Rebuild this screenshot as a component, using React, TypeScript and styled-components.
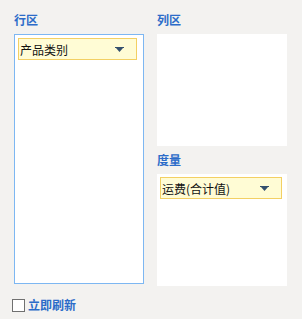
import * as React from 'react';
import styled, { createGlobalStyle } from 'styled-components';

const GlobalStyle = createGlobalStyle`
    html, body {
        margin: 0;
        padding: 0;
        background: #f3f2f0;
    }
    body {
        font-family: "Noto Sans CJK SC", "Noto Sans", sans-serif;
    }
`;

interface FieldProps {
    name: string;
}

const Field = ({ name }: FieldProps) => (
    <FieldChip>
        <span>{name}</span>
        <Arrow viewBox="0 0 9 5">
            <rect x="0" y="0" width="9" height="1" fill="#34506e" />
            <polygon points="1,1 8,1 4.5,5" fill="#34506e" />
        </Arrow>
    </FieldChip>
);

export default function App() {
    return (
        <>
            <GlobalStyle />
            <Page>
                <Columns>
                    <Column>
                        <Label>行区</Label>
                        <Zone $height={250} $active>
                            <Field name="产品类别" />
                        </Zone>
                    </Column>
                    <Column>
                        <Label>列区</Label>
                        <Zone $height={112} />
                        <Label $spaced>度量</Label>
                        <Zone $height={112}>
                            <Field name="运费(合计值)" />
                        </Zone>
                    </Column>
                </Columns>
                <CheckRow>
                    <CheckBox />
                    <CheckText>立即刷新</CheckText>
                </CheckRow>
            </Page>
        </>
    );
}

const Page = styled.div`
    width: 302px;
    height: 319px;
    box-sizing: border-box;
    padding: 10px 0 0 14px;
    display: flex;
    flex-direction: column;
`;

const Columns = styled.div`
    display: grid;
    grid-template-columns: 130px 130px;
    column-gap: 13px;
    align-items: start;
`;

const Column = styled.div`
    display: flex;
    flex-direction: column;
`;

const Label = styled.div<{ $spaced?: boolean }>`
    height: 20px;
    line-height: 20px;
    margin-top: ${p => (p.$spaced ? '4px' : '0')};
    margin-bottom: 4px;
    font-size: 12px;
    font-weight: bold;
    color: #2c6cc9;
`;

const Zone = styled.div<{ $height: number; $active?: boolean }>`
    height: ${p => p.$height}px;
    box-sizing: border-box;
    background: #ffffff;
    border: ${p => (p.$active ? '1px solid #7db7f2' : 'none')};
    padding: ${p => (p.$active ? '3px 6px 3px 3px' : '3px 5px 3px 3px')};
`;

const FieldChip = styled.div`
    height: 22px;
    box-sizing: border-box;
    display: flex;
    align-items: center;
    justify-content: space-between;
    padding: 0 12px 0 1px;
    background: #fffcd5;
    border: 1px solid #f3d063;
    font-size: 12px;
    color: #111111;
`;

const Arrow = styled.svg`
    width: 9px;
    height: 5px;
`;

const CheckRow = styled.div`
    display: flex;
    align-items: center;
    gap: 3px;
    margin: 11px 0 0 -2px;
`;

const CheckBox = styled.div`
    width: 13px;
    height: 13px;
    box-sizing: border-box;
    border: 1px solid #707070;
    background: #ffffff;
`;

const CheckText = styled.span`
    font-size: 12px;
    font-weight: bold;
    color: #2c6cc9;
    line-height: 16px;
`;
